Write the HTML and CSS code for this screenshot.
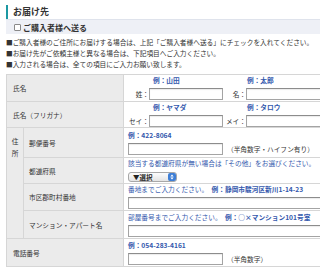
FILE: index.html
```html
<!DOCTYPE html>
<html lang="ja">
<head>
    <meta charset="UTF-8">
    <meta name="viewport" content="width=device-width, initial-scale=1.0">
    <title>お届け先</title>
    <link rel="stylesheet" href="styles.css">
</head>
<body>
    <div class="page">
        <h2 class="title">お届け先</h2>
        <label class="sendbar"><input type="checkbox" class="chk">ご購入者様へ送る</label>
        <ul class="notes">
            <li>■ご購入者様のご住所にお届けする場合は、上記「ご購入者様へ送る」にチェックを入れてください。</li>
            <li>■お届け先がご依頼主様と異なる場合は、下記項目へご入力ください。</li>
            <li>■入力される場合は、全ての項目にご入力お願い致します。</li>
        </ul>

        <table class="form">
            <colgroup>
                <col class="c1">
                <col class="c2">
                <col>
            </colgroup>
            <tr class="r27">
                <th colspan="2" class="lbl">氏名</th>
                <td class="val">
                    <div class="pair">
                        <div class="half first">
                            <div class="ex">例：山田</div>
                            <div class="field"><span class="fl">姓：</span><input type="text" class="in-name"></div>
                        </div>
                        <div class="half second">
                            <div class="ex">例：太郎</div>
                            <div class="field"><span class="fl">名：</span><input type="text" class="in-name wide"></div>
                        </div>
                    </div>
                </td>
            </tr>
            <tr class="r26">
                <th colspan="2" class="lbl">氏名（フリガナ）</th>
                <td class="val">
                    <div class="pair">
                        <div class="half first">
                            <div class="ex">例：ヤマダ</div>
                            <div class="field"><span class="fl">セイ：</span><input type="text" class="in-name"></div>
                        </div>
                        <div class="half second">
                            <div class="ex">例：タロウ</div>
                            <div class="field"><span class="fl">メイ：</span><input type="text" class="in-name wide"></div>
                        </div>
                    </div>
                </td>
            </tr>
            <tr class="r30">
                <th rowspan="4" class="addr">住<br>所</th>
                <th class="sub">郵便番号</th>
                <td class="val">
                    <div class="ex">例：422-8064</div>
                    <div class="field"><input type="text" class="in-short"><span class="hint">（半角数字・ハイフン有り）</span></div>
                </td>
            </tr>
            <tr class="r26">
                <th class="sub">都道府県</th>
                <td class="val">
                    <div class="ex note">該当する都道府県が無い場合は「その他」をお選びください。</div>
                    <div class="field">
                        <div class="select">
                            <span class="select-text">▼選択</span>
                            <svg class="stepper" width="8" height="8" viewBox="0 0 8 8">
                                <rect x="0" y="0" width="8" height="8" rx="2" fill="#3f7fd6"/>
                                <path d="M2.3 3.4 L4 1.4 L5.7 3.4 Z" fill="#fff"/>
                                <path d="M2.3 4.6 L4 6.6 L5.7 4.6 Z" fill="#fff"/>
                            </svg>
                        </div>
                    </div>
                </td>
            </tr>
            <tr class="r27">
                <th class="sub">市区郡町村番地</th>
                <td class="val">
                    <div class="ex note">番地までご入力ください。　<b>例：静岡市駿河区新川1-14-23</b></div>
                    <div class="field"><input type="text" class="in-long"></div>
                </td>
            </tr>
            <tr class="r28">
                <th class="sub">マンション・アパート名</th>
                <td class="val">
                    <div class="ex note">部屋番号までご入力ください。　<b>例：○×マンション101号室</b></div>
                    <div class="field"><input type="text" class="in-long"></div>
                </td>
            </tr>
            <tr class="r28">
                <th colspan="2" class="lbl">電話番号</th>
                <td class="val">
                    <div class="ex">例：054-283-4161</div>
                    <div class="field"><input type="text" class="in-short"><span class="hint">（半角数字）</span></div>
                </td>
            </tr>
        </table>
    </div>
</body>
</html>
```

FILE: styles.css
```css
html, body {
    margin: 0;
    padding: 0;
    background-color: #fff;
    overflow: hidden;
}
body {
    font-family: "Noto Sans CJK JP", "Noto Sans", sans-serif;
    font-size: 6.7px;
    color: #333;
}
.page {
    width: 430px;
    padding: 5px 0 0 6px;
}
.title {
    margin: 0;
    height: 14px;
    line-height: 14px;
    border-left: 2px solid #1b98a2;
    padding-left: 5px;
    font-size: 9px;
    font-weight: bold;
    color: #333;
}
.sendbar {
    display: flex;
    align-items: center;
    height: 14px;
    padding-left: 8px;
    background-color: #eef0f6;
    border-top: 1px solid #dfe3ec;
    font-size: 8px;
    font-weight: bold;
    color: #333;
}
.chk {
    -webkit-appearance: none;
    appearance: none;
    width: 7px;
    height: 7px;
    margin: 1px 2px 0 0;
    border: 1px solid #8a8a8a;
    border-radius: 1px;
    background-color: #fff;
}
.notes {
    list-style: none;
    margin: 3px 0 0;
    padding: 0;
    line-height: 11px;
    color: #333;
}
.notes li {
    white-space: nowrap;
}
/* Form table */
.form {
    margin-top: 4px;
    width: 424px;
    border-collapse: collapse;
    table-layout: fixed;
}
.form col.c1 {
    width: 17px;
}
.form col.c2 {
    width: 100px;
}
.form th,
.form td {
    border: 1px solid #d6d6d6;
    padding: 0;
}
.form th {
    background-color: #ebebeb;
    font-weight: normal;
    text-align: left;
    vertical-align: middle;
    color: #333;
    white-space: nowrap;
}
.form th.lbl {
    padding-left: 6px;
}
.form th.sub {
    padding-left: 5px;
}
.form th.addr {
    vertical-align: top;
    text-align: center;
    line-height: 12px;
    padding-top: 7px;
}
.r26 { height: 26px; }
.r27 { height: 27px; }
.r28 { height: 28px; }
.r30 { height: 30px; }
.val {
    padding: 0 0 0 4px !important;
    vertical-align: middle;
    background-color: #fff;
}
.ex {
    line-height: 9px;
    height: 9px;
    margin-bottom: 3px;
    color: #3358ad;
    font-weight: bold;
    white-space: nowrap;
}
.ex.note {
    font-weight: normal;
}
.ex b {
    font-weight: bold;
}
.field {
    display: flex;
    align-items: center;
    height: 12px;
}
.field input {
    box-sizing: border-box;
    height: 12px;
    margin: 0;
    padding: 0;
    border: 1px solid #a4a4a4;
    border-top-color: #8c8c8c;
    background-color: #fff;
    box-shadow: inset 0 1px 1px rgba(0,0,0,0.08);
}
.pair {
    display: flex;
}
.half.first {
    width: 96px;
}
.half.first .ex {
    padding-left: 25px;
}
.half.second .ex {
    padding-left: 23px;
}
.fl {
    display: inline-block;
    text-align: right;
    white-space: nowrap;
}
.half.first .fl {
    width: 21px;
}
.half.second .fl {
    width: 22px;
}
.in-name {
    width: 74px;
}
.in-name.wide {
    width: 120px;
}
.in-short {
    width: 95px;
}
.in-long {
    width: 260px;
}
.hint {
    margin-left: 4px;
    white-space: nowrap;
}
/* Mac style select */
.select {
    position: relative;
    box-sizing: border-box;
    width: 49px;
    height: 10px;
    border: 1px solid #a8a8a8;
    border-radius: 3px;
    background: linear-gradient(#fdfdfd, #e4e4e4);
    font-weight: bold;
    line-height: 8px;
    padding-left: 4px;
    color: #222;
}
.select-text {
    font-size: 6.5px;
}
.stepper {
    position: absolute;
    right: 0;
    top: 0;
}
```
